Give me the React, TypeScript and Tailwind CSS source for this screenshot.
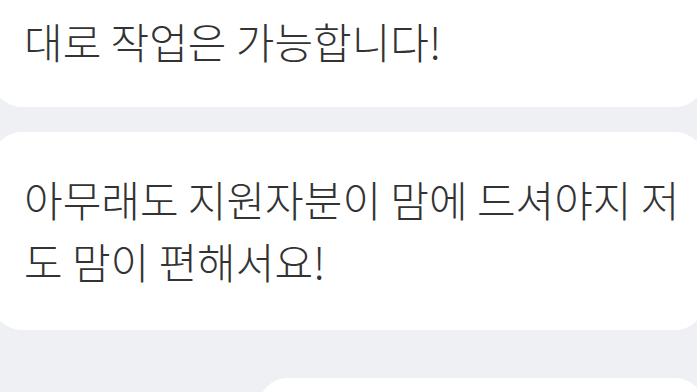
import React from "react";

export default function App() {
  const font = "[font-family:'Noto_Sans_CJK_KR','Noto_Sans_CJK_SC',sans-serif]";
  return (
    <div className={`w-[697px] h-[392px] overflow-hidden bg-[#eef0f3] ${font}`}>
      <div className="flex flex-col">
        <div className="-mt-[29px] -mx-[8px] rounded-[30px] bg-white pl-[32px] pr-[20px] pt-[39px] pb-[35px]">
          <p className="text-[42px] font-light leading-[62px] text-[#333333] whitespace-nowrap">대로 작업은 가능합니다!</p>
        </div>
        <div className="mt-[25px] -mx-[8px] rounded-[30px] bg-white pl-[32px] pr-[20px] pt-[36px] pb-[38px]">
          <p className="text-[42px] font-light leading-[62px] text-[#333333] whitespace-nowrap">
            아무래도 지원자분이 맘에 드셔야지 저
            <br />
            도 맘이 편해서요!
          </p>
        </div>
        <div className="mt-[48px] ml-[258px] -mr-[8px] h-[100px] rounded-[30px] bg-white" />
      </div>
    </div>
  );
}
